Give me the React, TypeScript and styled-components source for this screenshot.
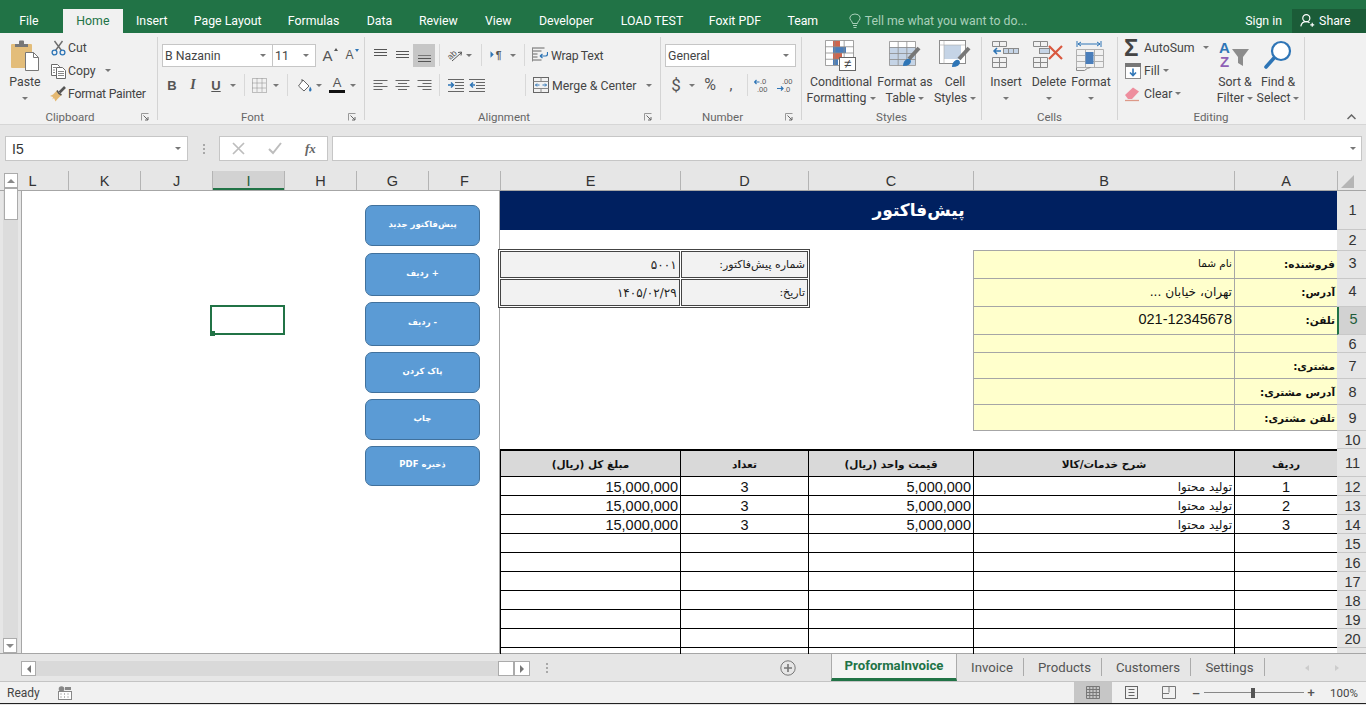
import React from "react";
import styled, { createGlobalStyle } from "styled-components";

const UI = `Roboto, "Noto Sans", "DejaVu Sans", sans-serif`;
const CELL = `"Liberation Sans", "DejaVu Sans", sans-serif`;
const FA = `"DejaVu Sans", sans-serif`;
const GREEN = "#217346";
const BLUE = "#2e75b6";

const Global = createGlobalStyle`
  html, body { margin: 0; padding: 0; height: 100%; overflow: hidden; background: #e6e6e6; }
  * { box-sizing: border-box; }
`;

const Page = styled.div`
  width: 1366px; height: 705px; display: flex; flex-direction: column; overflow: hidden;
  font-family: ${UI}; font-size: 12.3px; color: #444;
`;

/* ---------- title tabs ---------- */
const TabBar = styled.div`
  height: 33px; background: ${GREEN}; padding-top: 9px; display: flex; align-items: stretch; color: #fff; flex: none;
`;
const TopTab = styled.div<{ $w: number; $active?: boolean; $gap?: number }>`
  width: ${p => p.$w}px; margin-right: ${p => p.$gap || 0}px; display: flex; align-items: center; justify-content: center;
  font-size: 12.3px; padding-bottom: 1px;
  background: ${p => (p.$active ? "#f1f1f1" : "transparent")};
  color: ${p => (p.$active ? GREEN : "#fff")};
`;
const TellMe = styled.div`
  width: 397px; margin-left: 15px; display: flex; align-items: center; gap: 4px; color: #a9d0ba; font-size: 12.3px; padding-bottom: 1px;
`;
const SignIn = styled.div`
  width: 47px; display: flex; align-items: center; font-size: 12.3px; padding-bottom: 1px;
`;
const Share = styled.div`
  width: 74px; background: #1b5c38; display: flex; align-items: center; gap: 4px; padding: 0 0 1px 8px; font-size: 12.3px;
`;

/* ---------- ribbon ---------- */
const Ribbon = styled.div`
  height: 92px; flex: none; background: #f1f1f1; border-bottom: 1px solid #d6d6d6; display: flex; align-items: stretch; position: relative;
`;
const Group = styled.div<{ $w: number }>`
  width: ${p => p.$w}px; flex: none; display: flex; flex-direction: column;
`;
const GroupSep = styled.div`
  width: 1px; flex: none; margin: 4px 0; background: #d4d4d4;
`;
const GroupBody = styled.div<{ $col?: boolean; $left?: number }>`
  height: 76px; flex: none; display: flex; flex-direction: ${p => (p.$col ? "column" : "row")};
  padding-left: ${p => p.$left || 0}px;
  ${p => (p.$col ? "padding-top: 11px; gap: 8px;" : "")}
`;
const GroupFoot = styled.div`
  height: 15px; display: flex; align-items: center; padding-top: 1px;
`;
const FootLabel = styled.div`
  flex: 1; text-align: center; color: #666; font-size: 11.5px; line-height: 15px;
`;
const Launcher = styled.div`
  width: 17px; display: flex; align-items: center; justify-content: flex-start; padding-left: 1px;
`;
const ToolRow = styled.div`
  height: 22px; display: flex; align-items: center; flex: none;
`;
const Slot = styled.div<{ $w: number; $on?: boolean }>`
  width: ${p => p.$w}px; height: ${p => (p.$on ? 23 : 22)}px; flex: none; display: flex; align-items: center; justify-content: center;
  background: ${p => (p.$on ? "#c6c6c6" : "transparent")};
`;
const Spacer = styled.div<{ $w: number }>`
  width: ${p => p.$w}px; flex: none;
`;
const RowSep = styled.div`
  width: 1px; height: 22px; background: #d8d8d8; flex: none;
`;
const Caret = styled.span`
  display: inline-block; width: 0; height: 0; border-left: 3px solid transparent; border-right: 3px solid transparent;
  border-top: 3px solid #777; flex: none;
`;
const Combo = styled.div<{ $w: number; $ml?: number }>`
  width: ${p => p.$w}px; margin-left: ${p => p.$ml || 0}px; height: 23px; background: #fff; border: 1px solid #c6c6c6;
  display: flex; align-items: center; justify-content: space-between; padding: 1px 6px 0 2px; font-size: 12.3px; flex: none; color: #444;
`;
const ToolText = styled.span<{ $w?: number; $ml?: number; $tight?: boolean; $low?: boolean }>`
  display: inline-block; white-space: nowrap; margin-left: ${p => p.$ml ?? 3}px; ${p => (p.$w ? `width: ${p.$w}px;` : "")}
  font-size: 12.3px; flex: none; ${p => (p.$tight ? "letter-spacing: -0.25px;" : "")} ${p => (p.$low ? "padding-top: 1px;" : "")}
`;
const Stack = styled.div<{ $w?: number }>`
  display: flex; flex-direction: column; padding-top: 3px; ${p => (p.$w ? `width: ${p.$w}px;` : "")} flex: none;
`;
const StackRow = styled.div`
  height: 23px; display: flex; align-items: center; flex: none;
`;
const IconBox = styled.div<{ $w?: number }>`
  width: ${p => p.$w || 16}px; height: 16px; flex: none; display: flex; align-items: center; justify-content: center;
`;
const Big = styled.div<{ $w: number }>`
  width: ${p => p.$w}px; flex: none; display: flex; flex-direction: column; align-items: center; padding-top: 7px; font-size: 12.3px;
`;
const BigIcon = styled.div`
  height: 33px; display: flex; align-items: flex-start; justify-content: center; margin-bottom: 1px;
`;
const BigLine = styled.div`
  height: 16px; line-height: 16px; white-space: nowrap; display: flex; align-items: center; gap: 3px; justify-content: center;
`;
const Bold = styled.span`
  font-family: ${CELL}; font-weight: 700; font-size: 13px; color: #555;
`;
const Ital = styled.span`
  font-family: "Liberation Serif", serif; font-weight: 700; font-style: italic; font-size: 14px; color: #555;
`;
const Under = styled(Bold)`
  text-decoration: underline;
`;
const GrowA = styled.span<{ $s: number }>`
  font-family: ${CELL}; font-size: ${p => p.$s}px; color: #555; position: relative; line-height: 1;
`;
const TinyTip = styled.span<{ $c: string; $down?: boolean }>`
  position: absolute; right: -5px; top: 0; width: 0; height: 0; border-left: 2.5px solid transparent; border-right: 2.5px solid transparent;
  ${p => (p.$down ? `border-top: 3px solid ${p.$c};` : `border-bottom: 3px solid ${p.$c};`)}
`;
const FontColor = styled.div`
  display: flex; flex-direction: column; align-items: center; font-family: ${CELL}; font-size: 13px; line-height: 12px; color: #555; width: 16px;
`;
const ColorBar = styled.div`
  width: 16px; height: 3px; background: #111; margin-top: 1px;
`;
const NumSign = styled.span<{ $s?: number }>`
  font-size: ${p => p.$s || 15}px; color: #555; font-family: ${UI}; line-height: 1;
`;
const CollapseBtn = styled.div`
  position: absolute; right: 10px; bottom: 4px; line-height: 0;
`;

/* ---------- formula bar ---------- */
const FormulaBar = styled.div`
  height: 46px; flex: none; background: #e6e6e6; padding: 11px 4px 10px 5px; display: flex; align-items: stretch;
`;
const NameBox = styled.div`
  width: 183px; background: #fff; border: 1px solid #c6c6c6; display: flex; align-items: center; justify-content: space-between;
  padding: 0 6px 0 6px; font-family: ${CELL}; font-size: 14px; color: #333;
`;
const BarDots = styled.div`
  width: 31px; display: flex; flex-direction: column; align-items: center; justify-content: center; gap: 2px;
`;
const Dot = styled.span`
  width: 2px; height: 2px; background: #a8a8a8; display: block;
`;
const FxBox = styled.div`
  width: 109px; background: #fff; border: 1px solid #c6c6c6; display: flex; align-items: center; padding-left: 12px; gap: 23px;
`;
const FxText = styled.span`
  font-family: "Liberation Serif", serif; font-style: italic; font-size: 13px; color: #666; font-weight: 700;
`;
const FormulaInput = styled.div`
  flex: 1; margin-left: 4px; background: #fff; border: 1px solid #c6c6c6; display: flex; align-items: center; justify-content: flex-end; padding-right: 5px;
`;

/* ---------- sheet ---------- */
const HeadStrip = styled.div`
  height: 20px; flex: none; display: flex; background: #e6e6e6; border-bottom: 1px solid #a6a6a6;
`;
const ScrollTop = styled.div`
  width: 22px; flex: none; padding: 2px 0 0 4px;
`;
const ScrollBtn = styled.div<{ $w?: number; $h?: number }>`
  width: ${p => p.$w || 14}px; height: ${p => p.$h || 15}px; background: #fff; border: 1px solid #ababab; display: flex; align-items: center; justify-content: center; flex: none;
`;
const TriUp = styled.span`
  width: 0; height: 0; border-left: 4px solid transparent; border-right: 4px solid transparent; border-bottom: 4px solid #8a8a8a;
`;
const TriDown = styled.span`
  width: 0; height: 0; border-left: 4px solid transparent; border-right: 4px solid transparent; border-top: 4px solid #8a8a8a;
`;
const TriLeft = styled.span`
  width: 0; height: 0; border-top: 4px solid transparent; border-bottom: 4px solid transparent; border-right: 4px solid #777;
`;
const TriRight = styled.span`
  width: 0; height: 0; border-top: 4px solid transparent; border-bottom: 4px solid transparent; border-left: 4px solid #777;
`;
const ColHeads = styled.div`
  flex: 1; display: flex; justify-content: flex-end; overflow: hidden; min-width: 0;
`;
const ColHead = styled.div<{ $w: number; $sel?: boolean }>`
  width: ${p => p.$w}px; flex: none; display: flex; align-items: center; justify-content: center;
  font-family: ${CELL}; font-size: 14.5px; color: ${p => (p.$sel ? "#1f5c3a" : "#333")};
  background: ${p => (p.$sel ? "#d2d2d2" : "transparent")};
  border-left: 1px solid #b4b4b4;
  ${p => (p.$sel ? `box-shadow: inset 0 -2px 0 ${GREEN};` : "")}
`;
const Corner = styled.div`
  width: 29px; flex: none; display: flex; align-items: flex-end; padding: 0 0 2px 3px; border-left: 1px solid #b4b4b4;
`;
const SheetBody = styled.div`
  height: 463px; flex: none; display: flex; border-bottom: 1px solid #a6a6a6; position: relative; clip-path: inset(-3px 0 0 0);
`;
const VScroll = styled.div`
  width: 21px; flex: none; background: #e6e6e6; padding: 0 3px; display: flex; flex-direction: column;
`;
const VTrack = styled.div`
  flex: 1; background: #dcdcdc; display: flex; flex-direction: column; width: 15px; justify-content: space-between;
`;
const VThumb = styled.div`
  width: 14px; height: 32px; margin-left: 1px; margin-top: -3px; background: #fff; border: 1px solid #ababab;
`;
const VDown = styled(ScrollBtn)`
  margin-left: 0;
`;
const Blank = styled.div`
  width: 479px; flex: none; background: #fff; border-left: 1px solid #a6a6a6; border-right: 1px solid #a6a6a6; position: relative;
`;
const Selected = styled.div`
  position: absolute; left: 188px; top: 114px; width: 75px; height: 30px; border: 2px solid ${GREEN};
`;
const Handle = styled.span`
  position: absolute; left: -2px; bottom: -3px; width: 5px; height: 5px; background: ${GREEN}; border: 0;
`;
const ShapeStack = styled.div`
  position: absolute; left: 343px; top: 14px; width: 115px; display: flex; flex-direction: column;
`;
const ShapeBtn = styled.div<{ $h: number; $gap: number }>`
  height: ${p => p.$h}px; margin-bottom: ${p => p.$gap}px; background: #5b9bd5; border: 1px solid #41719c; border-radius: 7px;
  display: flex; align-items: center; justify-content: center; color: #fff; font-family: ${FA}; font-weight: 700; font-size: 8.5px;
  padding-bottom: 4px; direction: rtl;
`;
const Table = styled.div`
  width: 837px; flex: none; display: grid; grid-template-columns: 180px 128px 165px 261px 103px;
  grid-template-rows: 39px 21px 28px 28px 28px 18px 26px 26px 26px 18px 28px repeat(10, 19px);
  background: #fff; position: relative; z-index: 1;
`;
const Title = styled.div`
  grid-column: 1 / -1; background: #002060; color: #fff; display: flex; align-items: center; justify-content: center;
  font-family: ${FA}; font-weight: 700; font-size: 17px; direction: rtl; padding-bottom: 2px;
`;
type Kind = "plain" | "yellow" | "head" | "data";
const kinds: Record<Kind, string> = {
  plain: "",
  yellow: "background:#ffffcc; border-left:1px solid #a6a6a6; border-bottom:1px solid #a6a6a6; box-shadow:0 -1px 0 #a6a6a6;",
  head: "background:#d9d9d9; border-left:1px solid #000; border-top:2px solid #000; border-bottom:1px solid #000; font-weight:700; justify-content:center;",
  data: "border-left:1px solid #000; border-bottom:1px solid #000; padding-top:2px;",
};
const Cell = styled.div<{ $k?: Kind; $c?: boolean; $fa?: boolean; $b?: boolean; $fs?: number; $up?: number }>`
  display: flex; align-items: center; min-width: 0; overflow: hidden; white-space: nowrap; color: #111; padding: 0 2px;
  justify-content: ${p => (p.$c ? "center" : "flex-start")};
  direction: rtl;
  font-family: ${p => (p.$fa ? FA : CELL)};
  font-size: ${p => (p.$fs ? `${p.$fs}px` : p.$fa ? "10.5px" : "14.5px")};
  ${p => (p.$b ? "font-weight:700;" : "")}
  ${p => kinds[p.$k || "plain"]}
  ${p => (p.$up ? `padding-bottom:${p.$up}px;` : "")}
`;
const InfoBlock = styled.div`
  grid-column: 1 / 3; grid-row: 3 / 5; margin: -2px -2px -1px -2px; background: #fff; border: 1px solid #444; padding: 1px; z-index: 1;
  display: grid; grid-template-columns: 179fr 127fr; grid-template-rows: 1fr 1fr; gap: 1px;
`;
const InfoCell = styled.div<{ $fs?: number }>`
  background: #f2f2f2; border: 1px solid #444; display: flex; align-items: center; direction: rtl; padding: 0 2px;
  font-family: ${FA}; font-size: ${p => p.$fs || 11}px; color: #222; white-space: nowrap; overflow: hidden;
`;
const RowHeads = styled.div`
  width: 29px; flex: none; display: flex; flex-direction: column; overflow: hidden; background: #e6e6e6;
`;
const RowHead = styled.div<{ $h: number; $sel?: boolean; $dy: number }>`
  height: ${p => p.$h}px; flex: none; display: flex; align-items: center; justify-content: center;
  padding-left: 2px; padding-top: ${p => Math.max(p.$dy, 0)}px; padding-bottom: ${p => Math.max(-p.$dy, 0)}px;
  font-family: ${CELL}; font-size: 14.5px; color: ${p => (p.$sel ? "#1f5c3a" : "#333")};
  background: ${p => (p.$sel ? "#d2d2d2" : "transparent")};
  border-bottom: 1px solid #c8c8c8;
  ${p => (p.$sel ? `border-left: 2px solid ${GREEN};` : "")}
`;

/* ---------- bottom ---------- */
const BottomBar = styled.div`
  height: 28px; flex: none; background: #e6e6e6; border-bottom: 1px solid #c4c4c4; display: flex; align-items: flex-start; padding-left: 21px;
`;
const HTrack = styled.div`
  width: 462px; height: 15px; margin-top: 7px; background: #d9d9d9; flex: none;
`;
const HPart = styled(ScrollBtn)`
  margin-top: 7px;
`;
const HDots = styled(BarDots)`
  width: 34px; height: 28px;
`;
const PlusBox = styled.div`
  width: 267px; height: 28px; display: flex; align-items: center; padding-left: 216px; flex: none;
`;
const SheetTab = styled.div<{ $w: number; $active?: boolean }>`
  width: ${p => p.$w}px; flex: none; display: flex; align-items: center; justify-content: center; font-size: 13.2px;
  ${p => p.$active
    ? `height: 27px; background:#f4f4f4; border-left:1px solid #ababab; border-right:1px solid #ababab; border-bottom:3px solid ${GREEN}; color:${GREEN}; font-weight:700; padding-bottom:1px;`
    : `height: 18px; margin-top: 4px; padding-left: 4px; border-right:1px solid #ababab; color:#555;`}
`;
const TabNav = styled.div`
  flex: 1; height: 27px; display: flex; align-items: center; justify-content: space-between; padding: 0 27px 0 40px;
`;
const NavArrow = styled.span<{ $left?: boolean }>`
  width: 0; height: 0; border-top: 3px solid transparent; border-bottom: 3px solid transparent;
  ${p => (p.$left ? "border-right: 4px solid #ccc;" : "border-left: 4px solid #ccc;")}
`;
const StatusBar = styled.div`
  height: 22px; flex: none; background: #f1f1f1; border-bottom: 1px solid #222; display: flex; align-items: stretch; font-size: 12px; padding-left: 7px;
`;
const StatusText = styled.div`
  width: 51px; display: flex; align-items: center; color: #444;
`;
const StatusIcon = styled.div`
  width: 1016px; display: flex; align-items: center;
`;
const ViewBtn = styled.div<{ $w: number; $on?: boolean }>`
  width: ${p => p.$w}px; flex: none; display: flex; align-items: center; justify-content: center; background: ${p => (p.$on ? "#c6c6c6" : "transparent")};
`;
const ZoomSign = styled.span`
  font-family: ${CELL}; font-weight: 700; font-size: 13px; color: #555; line-height: 1;
`;
const ZoomSlider = styled.div`
  width: 100px; height: 100%; flex: none; display: flex; align-items: center; position: relative;
`;
const ZoomLine = styled.div`
  width: 100%; height: 1px; background: #888;
`;
const ZoomThumb = styled.span`
  position: absolute; left: 47px; top: 6px; width: 4px; height: 10px; background: #555;
`;
const ZoomPct = styled.div`
  margin-left: 12px; display: flex; align-items: center; font-size: 11.5px; color: #444;
`;

/* ---------- icons ---------- */
const stroke = "#6a6a6a";
const Sci = () => (
  <svg width="15" height="16" viewBox="0 0 15 16" fill="none">
    <path d="M4.5 10.5 11.5 1M10.5 10.5 3.5 1" stroke="#6d6d6d" strokeWidth="1.4" />
    <circle cx="3.5" cy="12.5" r="2.4" stroke={BLUE} strokeWidth="1.3" />
    <circle cx="11.5" cy="12.5" r="2.4" stroke={BLUE} strokeWidth="1.3" />
  </svg>
);
const CopyI = () => (
  <svg width="15" height="16" viewBox="0 0 15 16" fill="none" stroke={stroke}>
    <path d="M.5 1.5h6l2 2v9h-8z" fill="#fff" />
    <path d="M5.5 4.5h6l3 3v8h-9z" fill="#fff" />
    <path d="M2 4.5h3M2 7h2M2 9.5h2M7 8.5h6M7 10.5h6M7 12.5h6" strokeWidth=".8" />
  </svg>
);
const Painter = () => (
  <svg width="16" height="16" viewBox="0 0 16 16">
    <path d="M0 10 3 8.5 7 4.5 11.5 9 7.5 13 5.5 15.5 4 12 2.5 13.5 3 11z" fill="#e4b871" />
    <path d="M7 4.5 9 7.5 11.5 9" stroke="#555" strokeWidth="1.6" fill="none" />
    <path d="M9.5 6.5 15 1" stroke="#555" strokeWidth="2.6" />
  </svg>
);
const Launch = () => (
  <svg width="8" height="8" viewBox="0 0 8 8" fill="none">
    <path d="M.5 7.5v-7h7" stroke="#999" />
    <path d="M2.5 2.5 7 7M7 4v3H4" stroke="#666" />
  </svg>
);
const Vert = ({ k }: { k: "t" | "m" | "b" }) => {
  const ys = k === "t" ? [3.5, 6.5, 9.5] : k === "m" ? [5.5, 8.5, 11.5] : [9.5, 12.5, 15.5];
  return (
    <svg width="15" height="18" viewBox="0 0 15 18" stroke="#555">
      {ys.map((y, i) => <path key={i} d={`M1 ${y}h13`} strokeOpacity={k === "b" && i === 0 ? 0.7 : 1} />)}
    </svg>
  );
};
const Horz = ({ k }: { k: "l" | "c" | "r" }) => {
  const lines = [[14, 0], [9, 1], [14, 2], [9, 3]];
  return (
    <svg width="15" height="14" viewBox="0 0 15 14" stroke="#666">
      {lines.map(([w, i]) => {
        const x = k === "l" ? 0.5 : k === "c" ? (15 - w) / 2 : 14.5 - w;
        return <path key={i} d={`M${x} ${2.5 + i * 3}h${w}`} />;
      })}
    </svg>
  );
};
const Indent = ({ out }: { out?: boolean }) => (
  <svg width="16" height="14" viewBox="0 0 16 14">
    <path d="M0 1.5h16M7 4.5h9M7 7.5h9M7 10.5h9M0 13.5h16" stroke="#666" />
    <path d={out ? "M6 7H2M4 4.5 1.5 7 4 9.5" : "M0 7h4.5M3 4.5 5.5 7 3 9.5"} stroke={BLUE} strokeWidth="1.5" fill="none" />
  </svg>
);
const Orient = () => (
  <svg width="16" height="16" viewBox="0 0 16 16" overflow="visible">
    <text x="1" y="11" transform="rotate(-45 5 9)" fontFamily="Liberation Sans" fontSize="8.5" fill="#555">ab</text>
    <path d="M5 14 14 6M11 5.5l3.5-.5-.5 3.5" stroke="#555" fill="none" />
  </svg>
);
const Wrap = () => (
  <svg width="16" height="16" viewBox="0 0 16 16" fill="none">
    <path d="M.5 1h12M.5 4h9M.5 7h5M.5 10h5M.5 13h9" stroke="#666" />
    <path d="M.5.5v14" stroke="#888" />
    <path d="M8 9h5.5q2 0 2-2V5M8 9l2.5-2M8 9l2.5 2" stroke={BLUE} strokeWidth="1.2" />
  </svg>
);
const Merge = () => (
  <svg width="16" height="16" viewBox="0 0 16 16" fill="none">
    <rect x=".5" y=".5" width="15" height="15" stroke="#666" />
    <path d="M.5 4.5h15M.5 11.5h15M8 .5v4M8 11.5v4" stroke="#888" />
    <path d="M2.5 8h4M4 6.5 2.5 8 4 9.5M13.5 8h-4M12 6.5 13.5 8 12 9.5" stroke={BLUE} />
  </svg>
);
const Borders = () => (
  <svg width="15" height="15" viewBox="0 0 15 15" fill="none" stroke="#888" strokeDasharray="1 1">
    <rect x=".5" y=".5" width="14" height="14" />
    <path d="M.5 5h14M.5 10h14M5 .5v14M10 .5v14" />
  </svg>
);
const Bucket = () => (
  <svg width="16" height="15" viewBox="0 0 16 15">
    <path d="M6 2 12 8 7 13 1.5 8z" fill="#fff" stroke="#666" />
    <path d="M4.5 1.5 6 3" stroke="#666" strokeWidth="1.4" />
    <path d="M13 8.5q2.5 3 1 4.5t-2-1z" fill={BLUE} />
  </svg>
);
const Rtl = () => (
  <svg width="16" height="14" viewBox="0 0 16 14">
    <path d="M.5 3v7L4 6.5z" fill={BLUE} />
    <text x="6" y="11" fontFamily="Liberation Sans" fontSize="11" fontWeight="700" fill="#555">¶</text>
  </svg>
);
const Decimal = ({ dec }: { dec?: boolean }) => (
  <svg width="16" height="15" viewBox="0 0 16 15" fontFamily="Liberation Sans" fontSize="7.5" fill="#555">
    <text x={dec ? 5 : 6} y="6">{dec ? ".00" : ".0"}</text>
    <text x={dec ? 7 : 3} y="14">{dec ? ".0" : ".00"}</text>
    {dec
      ? <path d="M0 10.5h6M4 8.5l2 2-2 2" stroke={BLUE} strokeWidth="1.2" fill="none" />
      : <path d="M.5 4h5M2.5 2 .5 4l2 2" stroke={BLUE} strokeWidth="1.2" fill="none" />}
  </svg>
);
const PasteI = () => (
  <svg width="30" height="31" viewBox="0 0 30 31">
    <rect x="1" y="4" width="21" height="24" rx="1" fill="#e3bd7a" />
    <path d="M5 7V4h4V1.5q0-1 1-1h3q1 0 1 1V4h4v3z" fill="#777" />
    <path d="M15.5 12.5h8l5 5v13h-13z" fill="#fff" stroke="#777" />
    <path d="M23.5 12.5v5h5" fill="none" stroke="#777" />
  </svg>
);
const gridLines = (x: number, y: number, w: number, h: number, cols: number, rows: number) => {
  let d = "";
  for (let i = 0; i <= cols; i++) d += `M${x + (w * i) / cols} ${y}v${h}`;
  for (let j = 0; j <= rows; j++) d += `M${x} ${y + (h * j) / rows}h${w}`;
  return d;
};
const CondI = () => (
  <svg width="32" height="32" viewBox="0 0 32 32" fill="none">
    <rect x=".5" y=".5" width="28" height="25" fill="#fff" />
    <rect x="8" y="1" width="7" height="6" fill="#d0654d" />
    <rect x="8" y="7" width="13" height="6" fill="#4a7ebb" />
    <rect x="8" y="13" width="9" height="6" fill="#d0654d" />
    <rect x="8" y="19" width="5" height="6" fill="#4a7ebb" />
    <path d={gridLines(0.5, 0.5, 28, 25, 3, 4)} stroke="#8c8c8c" strokeWidth=".8" />
    <rect x="14.5" y="17.5" width="16" height="13" fill="#fff" stroke="#666" />
    <text x="22.5" y="28" textAnchor="middle" fontFamily="Liberation Sans" fontSize="13" fill="#444">≠</text>
  </svg>
);
const TableI = () => (
  <svg width="32" height="32" viewBox="0 0 32 32" fill="none">
    <rect x=".5" y="1.5" width="26" height="24" fill="#fff" />
    <rect x=".5" y="7" width="26" height="18" fill="#c5d4e6" />
    <path d={gridLines(0.5, 1.5, 26, 24, 3, 4)} stroke="#8c8c8c" strokeWidth=".8" />
    <path d="M30 8 20 19" stroke="#777" strokeWidth="4" />
    <path d="M14 26q0-5 4-7 3-1 4 2 0 5-8 5z" fill={BLUE} />
  </svg>
);
const CellI = () => (
  <svg width="32" height="32" viewBox="0 0 32 32" fill="none">
    <rect x=".5" y=".5" width="26" height="23" fill="#fff" stroke="#8c8c8c" />
    <rect x="5" y="5" width="17" height="14" fill="#c5d4e6" />
    <path d="M.5 5h26M5 .5v23" stroke="#aaa" strokeWidth=".6" />
    <path d="M30 8 20 19" stroke="#777" strokeWidth="4" />
    <path d="M13 27q0-5 4-7 3-1 4 2 0 5-8 5z" fill={BLUE} />
  </svg>
);
const InsertI = () => (
  <svg width="28" height="30" viewBox="0 0 28 30" fill="none" stroke="#8a8a8a">
    <path d={gridLines(.5, 1.5, 14, 5, 2, 1)} />
    <path d="M2 11h7M5 8 2 11l3 3" stroke={BLUE} strokeWidth="1.5" />
    <rect x="11.5" y="8.5" width="15" height="5" fill="#c5d4e6" />
    <path d="M16.5 8.5v5M21.5 8.5v5" />
    <path d={gridLines(.5, 17.5, 14, 10, 2, 2)} />
  </svg>
);
const DeleteI = () => (
  <svg width="32" height="30" viewBox="0 0 32 30" fill="none" stroke="#8a8a8a">
    <path d={gridLines(.5, 1.5, 14, 5, 2, 1)} />
    <rect x="6.5" y="8.5" width="10" height="5" fill="#c5d4e6" />
    <path d={gridLines(.5, 17.5, 14, 10, 2, 2)} />
    <path d="M16 6 29 19M29 6 16 19" stroke="#d9583f" strokeWidth="2.2" />
  </svg>
);
const FormatI = () => (
  <svg width="30" height="32" viewBox="0 0 30 32" fill="none" stroke="#8a8a8a">
    <path d="M1 1v6M25 1v6M2 4h22M5 2 2 4l3 2M21 2l3 2-3 2" stroke={BLUE} />
    <path d={gridLines(.5, 9.5, 27, 18, 3, 3)} stroke="#b0b0b0" />
    <rect x="9.5" y="12" width="8" height="12" fill="#4a7ebb" stroke="none" />
    <path d="M.5 27.5v3h8q3-3 6-3" />
  </svg>
);
const SigmaI = () => (
  <svg width="18" height="16" viewBox="0 0 18 16" overflow="visible">
    <text x="0" y="16" fontFamily="Liberation Sans" fontSize="24" fontWeight="700" fill="#444">Σ</text>
  </svg>
);
const FillI = () => (
  <svg width="16" height="16" viewBox="0 0 16 16" fill="none">
    <rect x=".5" y=".5" width="15" height="15" fill="#fff" stroke="#8a8a8a" />
    <rect x="0" y="0" width="16" height="4" fill="#777" />
    <path d="M8 5.5v7M5 9.5l3 3 3-3" stroke={BLUE} strokeWidth="1.6" />
  </svg>
);
const ClearI = () => (
  <svg width="16" height="16" viewBox="0 0 16 16">
    <path d="M0 9 8 1.5l6 4-7 7.5H3z" fill="#ee8e9e" />
    <path d="M0 14.5h14" stroke="#d98" strokeWidth="1.3" />
  </svg>
);
const SortI = () => (
  <svg width="32" height="30" viewBox="0 0 32 30">
    <text x="0" y="13" fontFamily="Liberation Sans" fontWeight="700" fontSize="15" fill={BLUE}>A</text>
    <text x="1" y="27" fontFamily="Liberation Sans" fontWeight="700" fontSize="15" fill="#8e5fb5">Z</text>
    <path d="M13 9h17l-6 8v9l-5-3v-6z" fill="#8c8c8c" />
  </svg>
);
const FindI = () => (
  <svg width="30" height="30" viewBox="0 0 30 30" fill="none">
    <circle cx="18" cy="11" r="9" stroke={BLUE} strokeWidth="2.2" fill="#fff" />
    <path d="M11 18 3 27" stroke={BLUE} strokeWidth="3.6" strokeLinecap="round" />
  </svg>
);
const Bulb = () => (
  <svg width="12" height="16" viewBox="0 0 12 16" fill="none" stroke="#a9d0ba">
    <path d="M3.5 10.5q0-1.5-1.5-3t-1-3.5q1-3 5-3t5 3q.5 2-1 3.5t-1.5 3z" />
    <path d="M4 12.5h4M4.5 14.5h3" />
  </svg>
);
const PersonI = () => (
  <svg width="15" height="15" viewBox="0 0 19 17" fill="none" stroke="#fff" strokeWidth="1.5">
    <circle cx="8" cy="5.5" r="4.5" />
    <path d="M1 16q1-6 7-6 3 0 4 1.5M13 14h5M15.5 11.5v5" />
  </svg>
);
const CrossI = () => (
  <svg width="13" height="13" viewBox="0 0 13 13" stroke="#bdbdbd" strokeWidth="1.7"><path d="M1 1l11 11M12 1 1 12" /></svg>
);
const CheckI = () => (
  <svg width="14" height="13" viewBox="0 0 14 13" stroke="#bdbdbd" strokeWidth="2" fill="none"><path d="M1 7l4 4 8-10" /></svg>
);
const CornerTri = () => (
  <svg width="13" height="13" viewBox="0 0 13 13"><path d="M13 0v13H0z" fill="#b5b5b5" /></svg>
);
const PlusCircle = () => (
  <svg width="16" height="16" viewBox="0 0 16 16" fill="none" stroke="#777">
    <circle cx="8" cy="8" r="7.2" />
    <path d="M8 4v8M4 8h8" strokeWidth="1.6" />
  </svg>
);
const MacroI = () => (
  <svg width="14" height="14" viewBox="0 0 14 14">
    <circle cx="3.5" cy="3" r="2.8" fill="#888" />
    <rect x="7" y="1" width="6" height="3" fill="#888" />
    <rect x=".5" y="5.5" width="13" height="8" fill="#fff" stroke="#888" />
    <path d="M2.5 8h1M6 8h1M9.5 8h1M2.5 11h1M6 11h1M9.5 11h1" stroke="#777" />
  </svg>
);
const NormalView = () => (
  <svg width="14" height="13" viewBox="0 0 14 13" fill="none" stroke="#777"><path d={gridLines(.5, .5, 13, 12, 4, 4)} /></svg>
);
const PageView = () => (
  <svg width="13" height="13" viewBox="0 0 13 13" fill="none" stroke="#666"><rect x=".5" y=".5" width="12" height="12" /><path d="M3.5 3.5h6M3.5 6.5h6M3.5 9.5h6" /></svg>
);
const BreakView = () => (
  <svg width="14" height="13" viewBox="0 0 14 13" fill="none" stroke="#777"><path d="M.5.5h13v12H.5zM7 .5v6M.5 7.5h6.5" /></svg>
);
const Collapse = () => (
  <svg width="9" height="6" viewBox="0 0 9 6" fill="none" stroke="#666" strokeWidth="1.5"><path d="M.5 5 4.5 1l4 4" /></svg>
);

/* ---------- data ---------- */
const topTabs: [string, number, boolean?][] = [
  ["Home", 60, true], ["Insert", 58], ["Page Layout", 94], ["Formulas", 78], ["Data", 54], ["Review", 64],
  ["View", 56], ["Developer", 80], ["LOAD TEST", 92], ["Foxit PDF", 74], ["Team", 62],
];
const cols: [string, number, boolean?][] = [
  ["L", 72], ["K", 72], ["J", 72], ["I", 72, true], ["H", 72], ["G", 72], ["F", 72],
  ["E", 180], ["D", 128], ["C", 165], ["B", 261], ["A", 103],
];
const rowHeights = [39, 21, 28, 28, 28, 18, 26, 26, 26, 18, 28, 19, 19, 19, 19, 19, 19, 19, 19, 19, 19];
const rowShift = (i: number) => (i >= 2 && i <= 4 ? -3 : i >= 11 ? 2 : 0);
const shapes: [string, number, number][] = [
  ["پیش‌فاکتور جدید", 41, 7], ["+ ردیف", 43, 6], ["- ردیف", 44, 6], ["پاک کردن", 41, 6], ["چاپ", 41, 6], ["ذخیره PDF", 40, 0],
];
const yellowRows: { b: string; a: string; fs?: number; up: number }[] = [
  { b: "نام شما", a: "فروشنده:", fs: 10.5, up: 4 }, { b: "تهران، خیابان ...", a: "آدرس:", fs: 12.2, up: 2 }, { b: "021-12345678", a: "تلفن:", up: 3 },
  { b: "", a: "", up: 0 }, { b: "", a: "مشتری:", up: 0 }, { b: "", a: "آدرس مشتری:", up: 0 }, { b: "", a: "تلفن مشتری:", up: 0 },
];
const heads = ["مبلغ کل (ریال)", "تعداد", "قیمت واحد (ریال)", "شرح خدمات/کالا", "ردیف"];
const sheetTabs: [string, number, boolean?][] = [
  ["ProformaInvoice", 126, true], ["Invoice", 67], ["Products", 78], ["Customers", 89], ["Settings", 74],
];

const Foot = ({ label, launch }: { label: string; launch?: boolean }) => (
  <GroupFoot>
    <FootLabel>{label}</FootLabel>
    {launch && <Launcher><Launch /></Launcher>}
  </GroupFoot>
);

export default function App() {
  return (
    <Page>
      <Global />
      <TabBar>
        <TopTab $w={58} $gap={5}>File</TopTab>
        {topTabs.map(([t, w, a]) => <TopTab key={t} $w={w} $active={a}>{t}</TopTab>)}
        <TellMe><Bulb />Tell me what you want to do...</TellMe>
        <SignIn>Sign in</SignIn>
        <Share><PersonI />Share</Share>
      </TabBar>

      <Ribbon>
        <Group $w={157}>
          <GroupBody>
            <Big $w={50}>
              <BigIcon><PasteI /></BigIcon>
              <BigLine>Paste</BigLine>
              <BigLine><Caret /></BigLine>
            </Big>
            <Stack>
              <StackRow><IconBox><Sci /></IconBox><ToolText $ml={2}>Cut</ToolText></StackRow>
              <StackRow><IconBox><CopyI /></IconBox><ToolText $ml={2} $w={37}>Copy</ToolText><Caret /></StackRow>
              <StackRow><IconBox><Painter /></IconBox><ToolText $ml={2} $tight>Format Painter</ToolText></StackRow>
            </Stack>
          </GroupBody>
          <Foot label="Clipboard" launch />
        </Group>
        <GroupSep />

        <Group $w={206}>
          <GroupBody $col $left={4}>
            <ToolRow>
              <Combo $w={111}>B Nazanin<Caret /></Combo>
              <Combo $w={44} $ml={-1}>11<Caret /></Combo>
              <Slot $w={23}><GrowA $s={15}>A<TinyTip $c="#555" /></GrowA></Slot>
              <Slot $w={21}><GrowA $s={12}>A<TinyTip $c={BLUE} $down /></GrowA></Slot>
            </ToolRow>
            <ToolRow>
              <Slot $w={20}><Bold>B</Bold></Slot>
              <Slot $w={22}><Ital>I</Ital></Slot>
              <Slot $w={24}><Under>U</Under></Slot>
              <Slot $w={10}><Caret /></Slot>
              <Spacer $w={6} /><RowSep />
              <Slot $w={28}><Borders /></Slot>
              <Slot $w={6}><Caret /></Slot>
              <Spacer $w={8} /><RowSep /><Spacer $w={8} />
              <Slot $w={17}><Bucket /></Slot>
              <Slot $w={12}><Caret /></Slot>
              <Slot $w={24}><FontColor>A<ColorBar /></FontColor></Slot>
              <Slot $w={8}><Caret /></Slot>
            </ToolRow>
          </GroupBody>
          <Foot label="Font" launch />
        </Group>
        <GroupSep />

        <Group $w={295}>
          <GroupBody $col $left={4}>
            <ToolRow>
              <Slot $w={22}><Vert k="t" /></Slot>
              <Slot $w={22}><Vert k="m" /></Slot>
              <Slot $w={22} $on><Vert k="b" /></Slot>
              <Spacer $w={4} /><RowSep /><Spacer $w={5} />
              <Slot $w={20}><Orient /></Slot>
              <Slot $w={8}><Caret /></Slot>
              <Spacer $w={8} /><RowSep /><Spacer $w={8} />
              <Slot $w={15}><Rtl /></Slot>
              <Slot $w={16}><Caret /></Slot>
              <Spacer $w={3} /><RowSep /><Spacer $w={7} />
              <IconBox><Wrap /></IconBox><ToolText $tight $low>Wrap Text</ToolText>
            </ToolRow>
            <ToolRow>
              <Slot $w={22}><Horz k="l" /></Slot>
              <Slot $w={22}><Horz k="c" /></Slot>
              <Slot $w={22}><Horz k="r" /></Slot>
              <Spacer $w={4} /><RowSep /><Spacer $w={5} />
              <Slot $w={21}><Indent /></Slot>
              <Slot $w={22}><Indent out /></Slot>
              <Spacer $w={37} /><RowSep /><Spacer $w={7} />
              <IconBox><Merge /></IconBox><ToolText $w={92} $low>Merge &amp; Center</ToolText>
              <Slot $w={10}><Caret /></Slot>
            </ToolRow>
          </GroupBody>
          <Foot label="Alignment" launch />
        </Group>
        <GroupSep />

        <Group $w={140}>
          <GroupBody $col $left={4}>
            <ToolRow><Combo $w={131}>General<Caret /></Combo></ToolRow>
            <ToolRow>
              <Slot $w={22}><NumSign $s={17}>$</NumSign></Slot>
              <Slot $w={10}><Caret /></Slot>
              <Slot $w={26}><NumSign $s={16}>%</NumSign></Slot>
              <Slot $w={16}><NumSign $s={15}>,</NumSign></Slot>
              <Spacer $w={8} /><RowSep />
              <Slot $w={28}><Decimal /></Slot>
              <Slot $w={18}><Decimal dec /></Slot>
            </ToolRow>
          </GroupBody>
          <Foot label="Number" launch />
        </Group>
        <GroupSep />

        <Group $w={179}>
          <GroupBody>
            <Big $w={78}><BigIcon><CondI /></BigIcon><BigLine>Conditional</BigLine><BigLine>Formatting<Caret /></BigLine></Big>
            <Big $w={50}><BigIcon><TableI /></BigIcon><BigLine>Format as</BigLine><BigLine>Table<Caret /></BigLine></Big>
            <Big $w={50}><BigIcon><CellI /></BigIcon><BigLine>Cell</BigLine><BigLine>Styles<Caret /></BigLine></Big>
          </GroupBody>
          <Foot label="Styles" />
        </Group>
        <GroupSep />

        <Group $w={135}>
          <GroupBody>
            <Big $w={48}><BigIcon><InsertI /></BigIcon><BigLine>Insert</BigLine><BigLine><Caret /></BigLine></Big>
            <Big $w={38}><BigIcon><DeleteI /></BigIcon><BigLine>Delete</BigLine><BigLine><Caret /></BigLine></Big>
            <Big $w={46}><BigIcon><FormatI /></BigIcon><BigLine>Format</BigLine><BigLine><Caret /></BigLine></Big>
          </GroupBody>
          <Foot label="Cells" />
        </Group>
        <GroupSep />

        <Group $w={186}>
          <GroupBody $left={7}>
            <Stack $w={87}>
              <StackRow><IconBox><SigmaI /></IconBox><ToolText $w={59}>AutoSum</ToolText><Caret /></StackRow>
              <StackRow><IconBox><FillI /></IconBox><ToolText $w={19}>Fill</ToolText><Caret /></StackRow>
              <StackRow><IconBox><ClearI /></IconBox><ToolText $w={31}>Clear</ToolText><Caret /></StackRow>
            </Stack>
            <Big $w={46}><BigIcon><SortI /></BigIcon><BigLine>Sort &amp;</BigLine><BigLine>Filter<Caret /></BigLine></Big>
            <Big $w={40}><BigIcon><FindI /></BigIcon><BigLine>Find &amp;</BigLine><BigLine>Select<Caret /></BigLine></Big>
          </GroupBody>
          <Foot label="Editing" />
        </Group>
        <GroupSep />
        <CollapseBtn><Collapse /></CollapseBtn>
      </Ribbon>

      <FormulaBar>
        <NameBox>I5<Caret /></NameBox>
        <BarDots><Dot /><Dot /><Dot /></BarDots>
        <FxBox><CrossI /><CheckI /><FxText>fx</FxText></FxBox>
        <FormulaInput><Caret /></FormulaInput>
      </FormulaBar>

      <HeadStrip>
        <ScrollTop><ScrollBtn><TriUp /></ScrollBtn></ScrollTop>
        <ColHeads>
          {cols.map(([c, w, s]) => <ColHead key={c} $w={w} $sel={s}>{c}</ColHead>)}
        </ColHeads>
        <Corner><CornerTri /></Corner>
      </HeadStrip>

      <SheetBody>
        <VScroll>
          <VTrack>
            <VThumb />
            <VDown $w={14}><TriDown /></VDown>
          </VTrack>
        </VScroll>
        <Blank>
          <ShapeStack>
            {shapes.map(([t, h, g]) => <ShapeBtn key={t} $h={h} $gap={g}>{t}</ShapeBtn>)}
          </ShapeStack>
          <Selected><Handle /></Selected>
        </Blank>
        <Table>
          <Title>پیش‌فاکتور</Title>
          <Cell /><Cell /><Cell /><Cell /><Cell />
          <InfoBlock>
            <InfoCell $fs={12}>۵۰۰۱</InfoCell>
            <InfoCell>شماره پیش‌فاکتور:</InfoCell>
            <InfoCell $fs={12}>۱۴۰۵/۰۲/۲۹</InfoCell>
            <InfoCell>تاریخ:</InfoCell>
          </InfoBlock>
          {yellowRows.map(({ b, a, fs, up }, i) => (
            <React.Fragment key={i}>
              {i >= 2 && <Cell />}
              {i >= 2 && <Cell />}
              <Cell />
              <Cell $k="yellow" $fa={!!fs} $fs={fs} $up={up}>{b}</Cell>
              <Cell $k="yellow" $fa $b $up={i < 3 ? 1 : 0}>{a}</Cell>
            </React.Fragment>
          ))}
          <Cell /><Cell /><Cell /><Cell /><Cell />
          {heads.map(h => <Cell key={h} $k="head" $fa $b>{h}</Cell>)}
          {Array.from({ length: 10 }).map((_, r) => {
            const on = r < 3;
            return (
              <React.Fragment key={r}>
                <Cell $k="data">{on ? "15,000,000" : ""}</Cell>
                <Cell $k="data" $c>{on ? "3" : ""}</Cell>
                <Cell $k="data">{on ? "5,000,000" : ""}</Cell>
                <Cell $k="data" $fa $fs={12}>{on ? "تولید محتوا" : ""}</Cell>
                <Cell $k="data" $c>{on ? String(r + 1) : ""}</Cell>
              </React.Fragment>
            );
          })}
        </Table>
        <RowHeads>
          {rowHeights.map((h, i) => <RowHead key={i} $h={h} $sel={i === 4} $dy={rowShift(i)}>{i + 1}</RowHead>)}
        </RowHeads>
      </SheetBody>

      <BottomBar>
        <HPart $w={15}><TriLeft /></HPart>
        <HTrack />
        <HPart $w={16} />
        <HPart $w={16}><TriRight /></HPart>
        <HDots><Dot /><Dot /><Dot /></HDots>
        <PlusBox><PlusCircle /></PlusBox>
        {sheetTabs.map(([t, w, a]) => <SheetTab key={t} $w={w} $active={a}>{t}</SheetTab>)}
        <TabNav><NavArrow $left /><NavArrow /></TabNav>
      </BottomBar>

      <StatusBar>
        <StatusText>Ready</StatusText>
        <StatusIcon><MacroI /></StatusIcon>
        <ViewBtn $w={38} $on><NormalView /></ViewBtn>
        <ViewBtn $w={38}><PageView /></ViewBtn>
        <ViewBtn $w={38}><BreakView /></ViewBtn>
        <ViewBtn $w={16}><ZoomSign>–</ZoomSign></ViewBtn>
        <ZoomSlider><ZoomLine /><ZoomThumb /></ZoomSlider>
        <ViewBtn $w={14}><ZoomSign>+</ZoomSign></ViewBtn>
        <ZoomPct>100%</ZoomPct>
      </StatusBar>
    </Page>
  );
}
